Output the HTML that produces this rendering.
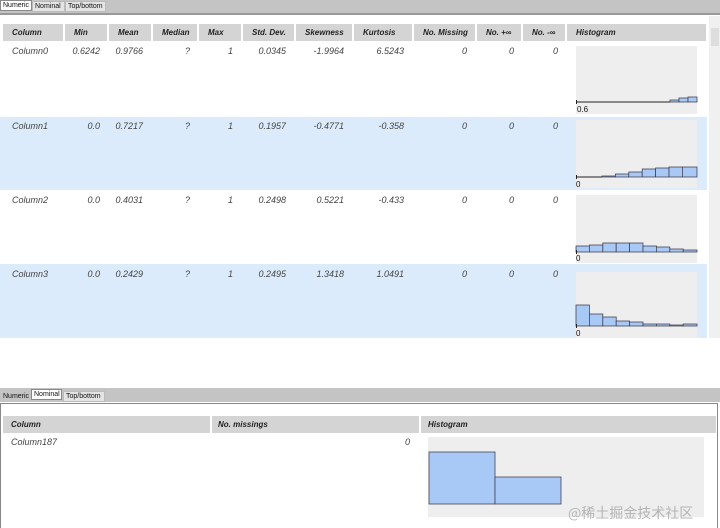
<!DOCTYPE html>
<html><head><meta charset="utf-8"><style>
*{margin:0;padding:0;box-sizing:border-box}
body{width:720px;height:528px;background:#fff;position:relative;overflow:hidden;font-family:"Liberation Sans",Arial,sans-serif;font-size:8px;color:#333}
.a{position:absolute}
.tab{position:absolute;height:11px;font-size:7px;line-height:10px;padding:0 2px;color:#111;background:#e4e4e4;border:1px solid #bbb}
.tab.s{background:#fff;border-color:#888}
.h{position:absolute;height:17px;background:#d4d4d4;font-weight:bold;font-style:italic;line-height:17px;color:#222;font-size:8px}
.c{position:absolute;font-style:italic;color:#444;font-size:9px;text-align:right}
</style></head><body>
<div class="a" style="left:0;top:0;width:720px;height:13px;background:#c4c4c4"></div>
<div class="a" style="left:0;top:13px;width:720px;height:2px;background:#999"></div>
<div class="tab s" style="left:0;top:0;width:32px">Numeric</div>
<div class="tab" style="left:32px;top:1px;width:33px">Nominal</div>
<div class="tab" style="left:65px;top:1px;width:41px">Top/bottom</div>
<div class="a" style="left:709px;top:16px;width:11px;height:322px;background:#f0f0f0"></div>
<div class="a" style="left:711px;top:28px;width:8px;height:18px;background:#ddd"></div>
<div class="a" style="left:0;top:42px;width:707px;height:75px;background:#fff"></div>
<div class="a" style="left:0;top:117px;width:707px;height:73px;background:#dcebfb"></div>
<div class="a" style="left:0;top:264px;width:707px;height:74px;background:#dcebfb"></div>

<div class="h" style="left:3px;top:24px;width:60px;padding-left:9px">Column</div>
<div class="h" style="left:65px;top:24px;width:42px;padding-left:9px">Min</div>
<div class="h" style="left:109px;top:24px;width:42px;padding-left:9px">Mean</div>
<div class="h" style="left:153px;top:24px;width:44px;padding-left:9px">Median</div>
<div class="h" style="left:199px;top:24px;width:42px;padding-left:9px">Max</div>
<div class="h" style="left:243px;top:24px;width:51px;padding-left:9px">Std. Dev.</div>
<div class="h" style="left:296px;top:24px;width:56px;padding-left:9px">Skewness</div>
<div class="h" style="left:354px;top:24px;width:58px;padding-left:9px">Kurtosis</div>
<div class="h" style="left:414px;top:24px;width:61px;padding-left:9px">No. Missing</div>
<div class="h" style="left:477px;top:24px;width:44px;padding-left:9px">No. +∞</div>
<div class="h" style="left:523px;top:24px;width:42px;padding-left:9px">No. -∞</div>
<div class="h" style="left:567px;top:24px;width:139px;padding-left:9px">Histogram</div>

<div class="c" style="left:12px;top:46px;text-align:left">Column0</div>
<div class="c" style="left:12px;top:121px;text-align:left">Column1</div>
<div class="c" style="left:12px;top:195px;text-align:left">Column2</div>
<div class="c" style="left:12px;top:269px;text-align:left">Column3</div>

<div class="c" style="left:60px;width:40px;top:46px">0.6242</div>
<div class="c" style="left:60px;width:40px;top:121px">0.0</div>
<div class="c" style="left:60px;width:40px;top:195px">0.0</div>
<div class="c" style="left:60px;width:40px;top:269px">0.0</div>

<div class="c" style="left:100px;width:43px;top:46px">0.9766</div>
<div class="c" style="left:100px;width:43px;top:121px">0.7217</div>
<div class="c" style="left:100px;width:43px;top:195px">0.4031</div>
<div class="c" style="left:100px;width:43px;top:269px">0.2429</div>

<div class="c" style="left:150px;width:40px;top:46px">?</div>
<div class="c" style="left:150px;width:40px;top:121px">?</div>
<div class="c" style="left:150px;width:40px;top:195px">?</div>
<div class="c" style="left:150px;width:40px;top:269px">?</div>

<div class="c" style="left:200px;width:33px;top:46px">1</div>
<div class="c" style="left:200px;width:33px;top:121px">1</div>
<div class="c" style="left:200px;width:33px;top:195px">1</div>
<div class="c" style="left:200px;width:33px;top:269px">1</div>

<div class="c" style="left:240px;width:46px;top:46px">0.0345</div>
<div class="c" style="left:240px;width:46px;top:121px">0.1957</div>
<div class="c" style="left:240px;width:46px;top:195px">0.2498</div>
<div class="c" style="left:240px;width:46px;top:269px">0.2495</div>

<div class="c" style="left:290px;width:54px;top:46px">-1.9964</div>
<div class="c" style="left:290px;width:54px;top:121px">-0.4771</div>
<div class="c" style="left:290px;width:54px;top:195px">0.5221</div>
<div class="c" style="left:290px;width:54px;top:269px">1.3418</div>

<div class="c" style="left:350px;width:54px;top:46px">6.5243</div>
<div class="c" style="left:350px;width:54px;top:121px">-0.358</div>
<div class="c" style="left:350px;width:54px;top:195px">-0.433</div>
<div class="c" style="left:350px;width:54px;top:269px">1.0491</div>

<div class="c" style="left:430px;width:37px;top:46px">0</div>
<div class="c" style="left:430px;width:37px;top:121px">0</div>
<div class="c" style="left:430px;width:37px;top:195px">0</div>
<div class="c" style="left:430px;width:37px;top:269px">0</div>

<div class="c" style="left:480px;width:34px;top:46px">0</div>
<div class="c" style="left:480px;width:34px;top:121px">0</div>
<div class="c" style="left:480px;width:34px;top:195px">0</div>
<div class="c" style="left:480px;width:34px;top:269px">0</div>

<div class="c" style="left:520px;width:38px;top:46px">0</div>
<div class="c" style="left:520px;width:38px;top:121px">0</div>
<div class="c" style="left:520px;width:38px;top:195px">0</div>
<div class="c" style="left:520px;width:38px;top:269px">0</div>

<svg class="a" style="left:0;top:0" width="720" height="528" font-family="Liberation Sans, Arial, sans-serif" font-size="8">
<g fill="#eeeeee"><rect x="576" y="46" width="121" height="68"/><rect x="576" y="120" width="121" height="68"/><rect x="576" y="195" width="121" height="68"/><rect x="576" y="272" width="121" height="66"/></g>
<g fill="#a8c8f5" stroke="#445" stroke-width="0.8">
<rect x="670" y="100" width="9" height="2"/><rect x="679" y="98" width="9" height="4"/><rect x="688" y="97" width="9" height="5"/>
<rect x="602" y="176" width="13.4" height="1"/><rect x="615.4" y="174" width="13.4" height="3"/><rect x="628.8" y="172" width="13.4" height="5"/><rect x="642.2" y="169" width="13.4" height="8"/><rect x="655.6" y="168" width="13.4" height="9"/><rect x="669" y="167" width="13.4" height="10"/><rect x="682.4" y="167" width="14.6" height="10"/>
<rect x="576" y="246" width="13.4" height="6"/><rect x="589.4" y="245" width="13.4" height="7"/><rect x="602.8" y="243" width="13.4" height="9"/><rect x="616.2" y="243" width="13.4" height="9"/><rect x="629.6" y="243" width="13.4" height="9"/><rect x="643" y="246" width="13.4" height="6"/><rect x="656.4" y="247" width="13.4" height="5"/><rect x="669.8" y="249" width="13.4" height="3"/><rect x="683.2" y="250" width="13.8" height="2"/>
<rect x="576" y="305" width="13.4" height="21"/><rect x="589.4" y="314" width="13.4" height="12"/><rect x="602.8" y="317" width="13.4" height="9"/><rect x="616.2" y="321" width="13.4" height="5"/><rect x="629.6" y="322" width="13.4" height="4"/><rect x="643" y="324" width="13.4" height="2"/><rect x="656.4" y="324" width="13.4" height="2"/><rect x="669.8" y="325" width="13.4" height="1"/><rect x="683.2" y="324" width="13.8" height="2"/>
</g>
<g stroke="#222" stroke-width="1"><line x1="576" y1="102" x2="670" y2="102"/><line x1="576" y1="177" x2="602" y2="177"/><line x1="576.5" y1="100" x2="576.5" y2="104"/><line x1="576.5" y1="175" x2="576.5" y2="179"/><line x1="576.5" y1="250" x2="576.5" y2="254"/><line x1="576.5" y1="324" x2="576.5" y2="328"/></g>
<g fill="#111"><text x="577" y="112">0.6</text><text x="576" y="187">0</text><text x="576" y="261">0</text><text x="576" y="336">0</text></g>
<rect x="0" y="388" width="720" height="14" fill="#c4c4c4"/>
<rect x="0.5" y="403.5" width="717" height="130" fill="#fff" stroke="#888"/>
<rect x="428" y="437" width="276" height="80" fill="#eeeeee"/>
<rect x="429" y="452" width="66" height="52" fill="#a8c8f5" stroke="#445" stroke-width="0.8"/>
<rect x="495" y="477" width="66" height="27" fill="#a8c8f5" stroke="#445" stroke-width="0.8"/>
<text x="568" y="518" font-family="Noto Sans CJK SC, sans-serif" font-size="14" fill="#b4b4b4">@稀土掘金技术社区</text>
</svg>
<div class="tab" style="left:0;top:391px;width:31px;border-color:#c4c4c4;background:#c4c4c4">Numeric</div>
<div class="tab s" style="left:31px;top:389px;width:31px">Nominal</div>
<div class="tab" style="left:63px;top:391px;width:42px">Top/bottom</div>
<div class="h" style="left:3px;top:416px;width:207px;padding-left:8px">Column</div>
<div class="h" style="left:212px;top:416px;width:207px;padding-left:6px">No. missings</div>
<div class="h" style="left:421px;top:416px;width:295px;padding-left:7px">Histogram</div>
<div class="c" style="left:11px;top:437px;text-align:left">Column187</div>
<div class="c" style="left:380px;width:30px;top:437px">0</div>
</body></html>
